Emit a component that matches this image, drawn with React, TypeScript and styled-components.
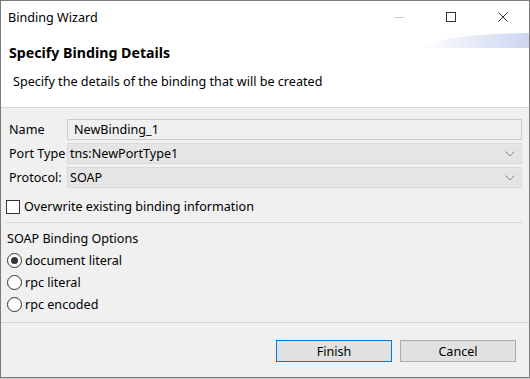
import styled, { createGlobalStyle } from "styled-components";

const Global = createGlobalStyle`
  html, body {
    margin: 0;
    padding: 0;
    background: #c9c9c9;
  }
  * {
    box-sizing: border-box;
  }
`

const Window = styled.div`
  width: 530px;
  height: 378px;
  border: 1px solid #7a7a7a;
  background: #f0f0f0;
  display: flex;
  flex-direction: column;
  font-family: "Noto Sans", "Open Sans", sans-serif;
  font-size: 12.6px;
  color: #000;
`

const TitleBar = styled.div`
  height: 32px;
  background: #fff;
  display: flex;
  align-items: center;
  padding-left: 7px;
`

const TitleText = styled.div`
  flex: 1;
`

const Controls = styled.div`
  display: flex;
  height: 100%;
`

const ControlButton = styled.div`
  width: 52px;
  height: 100%;
  display: flex;
  align-items: center;
  justify-content: center;
`

const Header = styled.div`
  position: relative;
  background: #fff;
  height: 75px;
  padding: 9px 8px 0 8px;
  border-bottom: 1px solid #d8d8d8;
`

const Banner = styled.svg`
  position: absolute;
  right: 0;
  top: 0;
`

const HeaderTitle = styled.div`
  font-weight: bold;
  font-size: 14.2px;
  line-height: 21px;
`

const HeaderDesc = styled.div`
  margin-top: 9px;
  padding-left: 4px;
  line-height: 19px;
`

const Body = styled.div`
  flex: 1;
  display: flex;
  flex-direction: column;
  padding: 11px 7px 0 4px;
`

const Form = styled.div`
  display: grid;
  grid-template-columns: 58px 1fr;
  row-gap: 3px;
  padding-left: 4px;
`

const Label = styled.div`
  height: 21px;
  display: flex;
  align-items: center;
  white-space: nowrap;
`

const TextField = styled.div`
  height: 21px;
  border: 1px solid #cccccc;
  background: #f0f0f0;
  display: flex;
  align-items: center;
  padding-left: 6px;
`

const Combo = styled.div`
  height: 21px;
  border: 1px solid #dadada;
  background: #e5e5e5;
  display: flex;
  align-items: center;
  padding: 0 6px 0 2px;
`

const ComboText = styled.div`
  flex: 1;
`

const CheckRow = styled.div`
  display: flex;
  align-items: center;
  gap: 4px;
  margin-top: 11px;
  padding-left: 1px;
  height: 15px;
`

const CheckBox = styled.div`
  width: 14px;
  height: 14px;
  border: 1px solid #333;
  background: #fff;
`

const Rule = styled.div<{ inset?: boolean }>`
  height: 1px;
  background: #d5d5d5;
  margin: ${props => props.inset ? "8px 0 0 1px" : "0"};
`

const GroupLabel = styled.div`
  margin-top: 7px;
  padding-left: 2px;
  line-height: 17px;
`

const RadioList = styled.div`
  display: flex;
  flex-direction: column;
  gap: 6px;
  margin-top: 5px;
  padding-left: 2px;
`

const RadioRow = styled.div`
  display: flex;
  align-items: center;
  gap: 3px;
  height: 16px;
`

const RadioCircle = styled.div<{ checked?: boolean }>`
  width: 15px;
  height: 15px;
  border-radius: 50%;
  border: 1px solid #333;
  background: #fff;
  display: flex;
  align-items: center;
  justify-content: center;

  &::after {
    content: "";
    width: 7px;
    height: 7px;
    border-radius: 50%;
    background: ${props => props.checked ? "#333" : "transparent"};
  }
`

const Footer = styled.div`
  height: 54px;
  display: flex;
  justify-content: flex-end;
  align-items: flex-start;
  gap: 8px;
  padding: 17px 13px 0 0;
`

const Button = styled.div<{ primary?: boolean }>`
  width: 116px;
  height: 22px;
  background: #e1e1e1;
  border: 1px solid ${props => props.primary ? "#0078d7" : "#adadad"};
  display: flex;
  align-items: center;
  justify-content: center;
`

const radios = [
  { label: "document literal", checked: true },
  { label: "rpc literal", checked: false },
  { label: "rpc encoded", checked: false },
]

const Chevron = () => (
  <svg width="10" height="6" viewBox="0 0 10 6">
    <path d="M0.5 0.5 L5 5 L9.5 0.5" fill="none" stroke="#8a8a8a" strokeWidth="1" />
  </svg>
)

export default function App() {
  return (
    <>
      <Global />
      <Window>
        <TitleBar>
          <TitleText>Binding Wizard</TitleText>
          <Controls>
            <ControlButton>
              <svg width="10" height="10" viewBox="0 0 10 10">
                <path d="M0 5.5 H10" stroke="#cfcfcf" strokeWidth="1" />
              </svg>
            </ControlButton>
            <ControlButton>
              <svg width="10" height="10" viewBox="0 0 10 10">
                <rect x="0.5" y="0.5" width="9" height="9" fill="none" stroke="#333" strokeWidth="1" />
              </svg>
            </ControlButton>
            <ControlButton>
              <svg width="10" height="10" viewBox="0 0 10 10">
                <path d="M0.5 0.5 L9.5 9.5 M9.5 0.5 L0.5 9.5" stroke="#333" strokeWidth="1" />
              </svg>
            </ControlButton>
          </Controls>
        </TitleBar>
        <Header>
          <Banner width="108" height="16" viewBox="0 0 108 16">
            <defs>
              <linearGradient id="bannerFill" x1="0" y1="0" x2="1" y2="0">
                <stop offset="0" stopColor="#ffffff" />
                <stop offset="0.5" stopColor="#e6eaf7" />
                <stop offset="1" stopColor="#cdd5f0" />
              </linearGradient>
            </defs>
            <path d="M0 15 C10 6 50 1 108 0 L108 15 Z" fill="url(#bannerFill)" />
          </Banner>
          <HeaderTitle>Specify Binding Details</HeaderTitle>
          <HeaderDesc>Specify the details of the binding that will be created</HeaderDesc>
        </Header>
        <Body>
          <Form>
            <Label>Name</Label>
            <TextField>NewBinding_1</TextField>
            <Label>Port Type</Label>
            <Combo>
              <ComboText>tns:NewPortType1</ComboText>
              <Chevron />
            </Combo>
            <Label>Protocol:</Label>
            <Combo>
              <ComboText>SOAP</ComboText>
              <Chevron />
            </Combo>
          </Form>
          <CheckRow>
            <CheckBox />
            <span>Overwrite existing binding information</span>
          </CheckRow>
          <Rule inset />
          <GroupLabel>SOAP Binding Options</GroupLabel>
          <RadioList>
            {radios.map(r => (
              <RadioRow key={r.label}>
                <RadioCircle checked={r.checked} />
                <span>{r.label}</span>
              </RadioRow>
            ))}
          </RadioList>
        </Body>
        <Rule />
        <Footer>
          <Button primary>Finish</Button>
          <Button>Cancel</Button>
        </Footer>
      </Window>
    </>
  )
}
